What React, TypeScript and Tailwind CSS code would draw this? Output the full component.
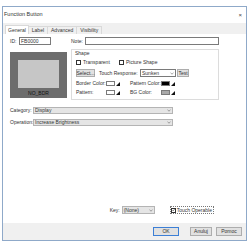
import React from 'react';

const font = { fontFamily: '"Liberation Sans", Arial, sans-serif' };

function Swatch({ fill }: { fill: string }) {
    return (
        <div className="flex items-center">
            <div className={`w-[9px] h-[5px] border border-[#7a7a7a] ${fill}`} />
            <svg width="4" height="4" viewBox="0 0 4 4" className="ml-[1px]">
                <polygon points="4,0 4,4 0,4" fill="#111" />
            </svg>
        </div>
    );
}

function Check({ checked = false }: { checked?: boolean }) {
    return (
        <div className="w-[5px] h-[5px] shrink-0 border border-[#333] bg-white flex items-center justify-center">
            {checked && (
                <svg width="4" height="4" viewBox="0 0 4 4">
                    <polyline points="0.5,2 1.5,3.2 3.5,0.8" fill="none" stroke="#222" strokeWidth="0.7" />
                </svg>
            )}
        </div>
    );
}

function Chevron() {
    return (
        <svg width="4" height="3" viewBox="0 0 4 3">
            <polyline points="0.5,0.8 2,2.2 3.5,0.8" fill="none" stroke="#666" strokeWidth="0.6" />
        </svg>
    );
}

export default function App() {
    return (
        <div className="w-[250px] h-[250px] bg-white pt-[6px] pl-[2px] text-[5px] leading-none text-[#333] whitespace-nowrap" style={font}>
            <div className="w-[245px] h-[235px] border border-[#8fa9c9] flex flex-col bg-white">
                <div className="h-[16px] flex items-center justify-between pl-[1px] pr-[4px] shrink-0">
                    <span className="text-[5.5px]">Function Button</span>
                    <span className="text-[6px] text-[#444]">×</span>
                </div>

                <div className="h-[11px] bg-[#f0f0f0] flex items-end pl-[2px] shrink-0">
                    <div className="h-[9px] px-[2px] bg-white border border-b-0 border-[#d9d9d9] flex items-center">General</div>
                    <div className="h-[8px] px-[3px] border-t border-r border-[#d9d9d9] flex items-center">Label</div>
                    <div className="h-[8px] px-[3px] border-t border-r border-[#d9d9d9] flex items-center">Advanced</div>
                    <div className="h-[8px] px-[3px] border-t border-r border-[#d9d9d9] flex items-center">Visibility</div>
                </div>

                <div className="h-[189px] shrink-0 flex flex-col px-[7px] pt-[3px]">
                    <div className="flex">
                        <div className="w-[58px] flex flex-col">
                            <div className="flex items-center h-[8px]">
                                <span className="w-[9px]">ID:</span>
                                <div className="w-[32px] h-[8px] border border-[#7a7a7a] flex items-center px-[1px]">FB0000</div>
                            </div>
                            <div className="mt-[7px] w-[57px] h-[46px] bg-[#6d6d6d] flex flex-col items-center pt-[8px]">
                                <div className="w-[41px] h-[28px] bg-[#c6c6c6]" />
                                <div className="mt-[3px] text-[#111]">NO_BDR</div>
                            </div>
                        </div>

                        <div className="ml-[3px] w-[148px] flex flex-col">
                            <div className="flex items-center h-[8px]">
                                <span className="w-[14px]">Note:</span>
                                <div className="flex-1 h-[8px] border border-[#7a7a7a]" />
                            </div>
                            <div className="mt-[4px] h-[51px] border border-[#dcdcdc] flex flex-col px-[4px] pt-[1px]">
                                <span className="-ml-[1px]">Shape</span>
                                <div className="mt-[4px] flex items-center">
                                    <Check />
                                    <span className="ml-[2px] w-[36px]">Transparent</span>
                                    <Check />
                                    <span className="ml-[2px]">Picture Shape</span>
                                </div>
                                <div className="mt-[4px] flex items-center">
                                    <div className="w-[19px] h-[8px] shrink-0 bg-[#e1e1e1] border border-[#adadad] flex items-center justify-center">Select...</div>
                                    <span className="ml-[4px] w-[41px] shrink-0">Touch Response:</span>
                                    <div className="w-[36px] h-[8px] shrink-0 border border-[#7a7a7a] flex items-center justify-between px-[1px]">
                                        <span>Sunken</span>
                                        <Chevron />
                                    </div>
                                    <div className="ml-[1px] w-[12px] h-[8px] shrink-0 bg-[#e1e1e1] border border-[#adadad] flex items-center justify-center">Test</div>
                                </div>
                                <div className="mt-[4px] flex items-center">
                                    <span className="w-[30px]">Border Color:</span>
                                    <Swatch fill="bg-white" />
                                    <span className="ml-[10px] w-[31px]">Pattern Color:</span>
                                    <Swatch fill="bg-black" />
                                </div>
                                <div className="mt-[4px] flex items-center">
                                    <span className="w-[30px]">Pattern:</span>
                                    <Swatch fill="bg-white" />
                                    <span className="ml-[10px] w-[31px]">BG Color:</span>
                                    <Swatch fill="bg-[#a9a9a9]" />
                                </div>
                            </div>
                        </div>
                    </div>

                    <div className="mt-[7px] flex items-center h-[7px]">
                        <span className="w-[23px]">Category:</span>
                        <div className="w-[140px] h-[7px] bg-[#e5e5e5] border border-[#b4b4b4] flex items-center justify-between px-[1px]">
                            <span>Display</span>
                            <Chevron />
                        </div>
                    </div>
                    <div className="mt-[5px] flex items-center h-[7px]">
                        <span className="w-[23px]">Operation:</span>
                        <div className="w-[140px] h-[7px] bg-[#e5e5e5] border border-[#b4b4b4] flex items-center justify-between px-[1px]">
                            <span>Increase Brightness</span>
                            <Chevron />
                        </div>
                    </div>

                    <div className="mt-auto mb-[9px] flex items-center justify-end pr-[25px]">
                        <span className="w-[12px]">Key:</span>
                        <div className="w-[33px] h-[8px] bg-[#e5e5e5] border border-[#b4b4b4] flex items-center justify-between px-[1px]">
                            <span>(None)</span>
                            <Chevron />
                        </div>
                        <div className="ml-[15px] h-[8px] border border-dotted border-[#777] flex items-center pr-[1px]">
                            <Check checked />
                            <span className="ml-[1px]">Touch Operable</span>
                        </div>
                    </div>
                </div>

                <div className="flex-1 bg-[#f0f0f0] flex items-center justify-end pr-[4px]">
                    <div className="w-[26px] h-[9px] bg-[#e1e1e1] border border-[#3c7fd6] flex items-center justify-center">OK</div>
                    <div className="ml-[11px] w-[22px] h-[9px] bg-[#e1e1e1] border border-[#adadad] flex items-center justify-center">Anuluj</div>
                    <div className="ml-[4px] w-[26px] h-[9px] bg-[#e1e1e1] border border-[#adadad] flex items-center justify-center">Pomoc</div>
                </div>
            </div>
        </div>
    );
}
